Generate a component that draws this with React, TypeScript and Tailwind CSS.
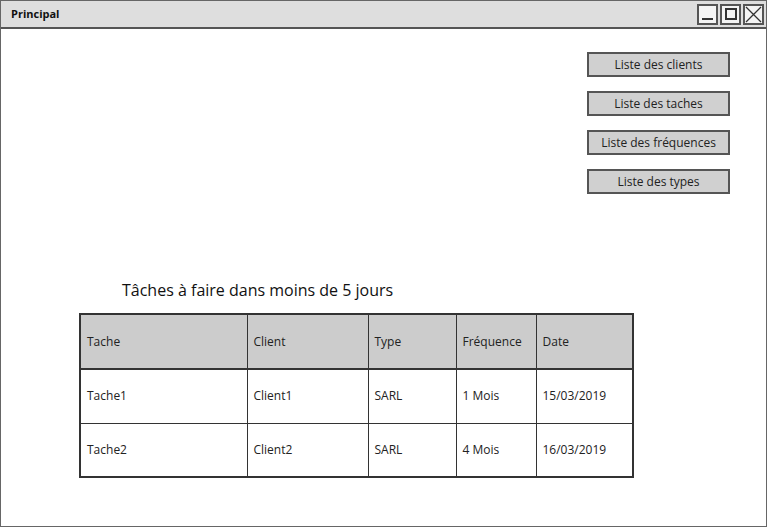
const buttons = [
  "Liste des clients",
  "Liste des taches",
  "Liste des fréquences",
  "Liste des types",
];

const columns = [
  { label: "Tache", width: "w-[167px]" },
  { label: "Client", width: "w-[121px]" },
  { label: "Type", width: "w-[88px]" },
  { label: "Fréquence", width: "w-[80px]" },
  { label: "Date", width: "w-[97px]" },
];

const rows = [
  ["Tache1", "Client1", "SARL", "1 Mois", "15/03/2019"],
  ["Tache2", "Client2", "SARL", "4 Mois", "16/03/2019"],
];

const font = "font-['Comic_Sans_MS','Open_Sans',sans-serif]";

function WindowButton({ children }: { children: React.ReactNode }) {
  return (
    <span className="flex size-[21px] items-center justify-center border-2 border-[#555] bg-[#f4f4f4]">
      {children}
    </span>
  );
}

export default function App() {
  return (
    <div
      className={`flex h-[527px] w-[767px] flex-col border border-[#666] bg-white text-[#222] ${font}`}
    >
      {/* title bar */}
      <div className="flex h-[28px] shrink-0 items-center justify-between border-b-2 border-[#555] bg-[#dedede] pl-[10px] pr-[2px]">
        <span className="text-[11px] font-bold text-[#111]">Principal</span>
        <div className="flex gap-[2px]">
          <WindowButton>
            <span className="mt-[9px] h-[2px] w-[11px] bg-[#333]" />
          </WindowButton>
          <WindowButton>
            <span className="size-[12px] border-2 border-[#333]" />
          </WindowButton>
          <WindowButton>
            <svg width="17" height="17" viewBox="0 0 17 17" stroke="#333" strokeWidth="1.3">
              <path d="M1 1L16 16M16 1L1 16" />
            </svg>
          </WindowButton>
        </div>
      </div>

      {/* menu buttons */}
      <div className="flex flex-col items-end gap-[14px] pr-[36px] pt-[23px]">
        {buttons.map((b) => (
          <button
            key={b}
            className="flex h-[25px] w-[143px] items-center justify-center border-2 border-[#555] bg-[#d0d0d0] text-[12px] text-[#222]"
          >
            {b}
          </button>
        ))}
      </div>

      <h2 className="mt-[86px] pl-[121px] text-[16px] leading-[20px] text-[#111]">
        Tâches à faire dans moins de 5 jours
      </h2>

      <table className="ml-[78px] mt-[13px] w-[553px] table-fixed border-collapse border-2 border-[#333] text-[12px]">
        <thead>
          <tr className="h-[55px] border-b-2 border-[#333] bg-[#cccccc]">
            {columns.map((c) => (
              <th
                key={c.label}
                className={`${c.width} border-r border-[#333] pl-[6px] text-left font-normal`}
              >
                {c.label}
              </th>
            ))}
          </tr>
        </thead>
        <tbody>
          {rows.map((r, i) => (
            <tr key={i} className="h-[54px] border-b border-[#333]">
              {r.map((cell, j) => (
                <td key={j} className="border-r border-[#333] pl-[6px]">
                  {cell}
                </td>
              ))}
            </tr>
          ))}
        </tbody>
      </table>
    </div>
  );
}
